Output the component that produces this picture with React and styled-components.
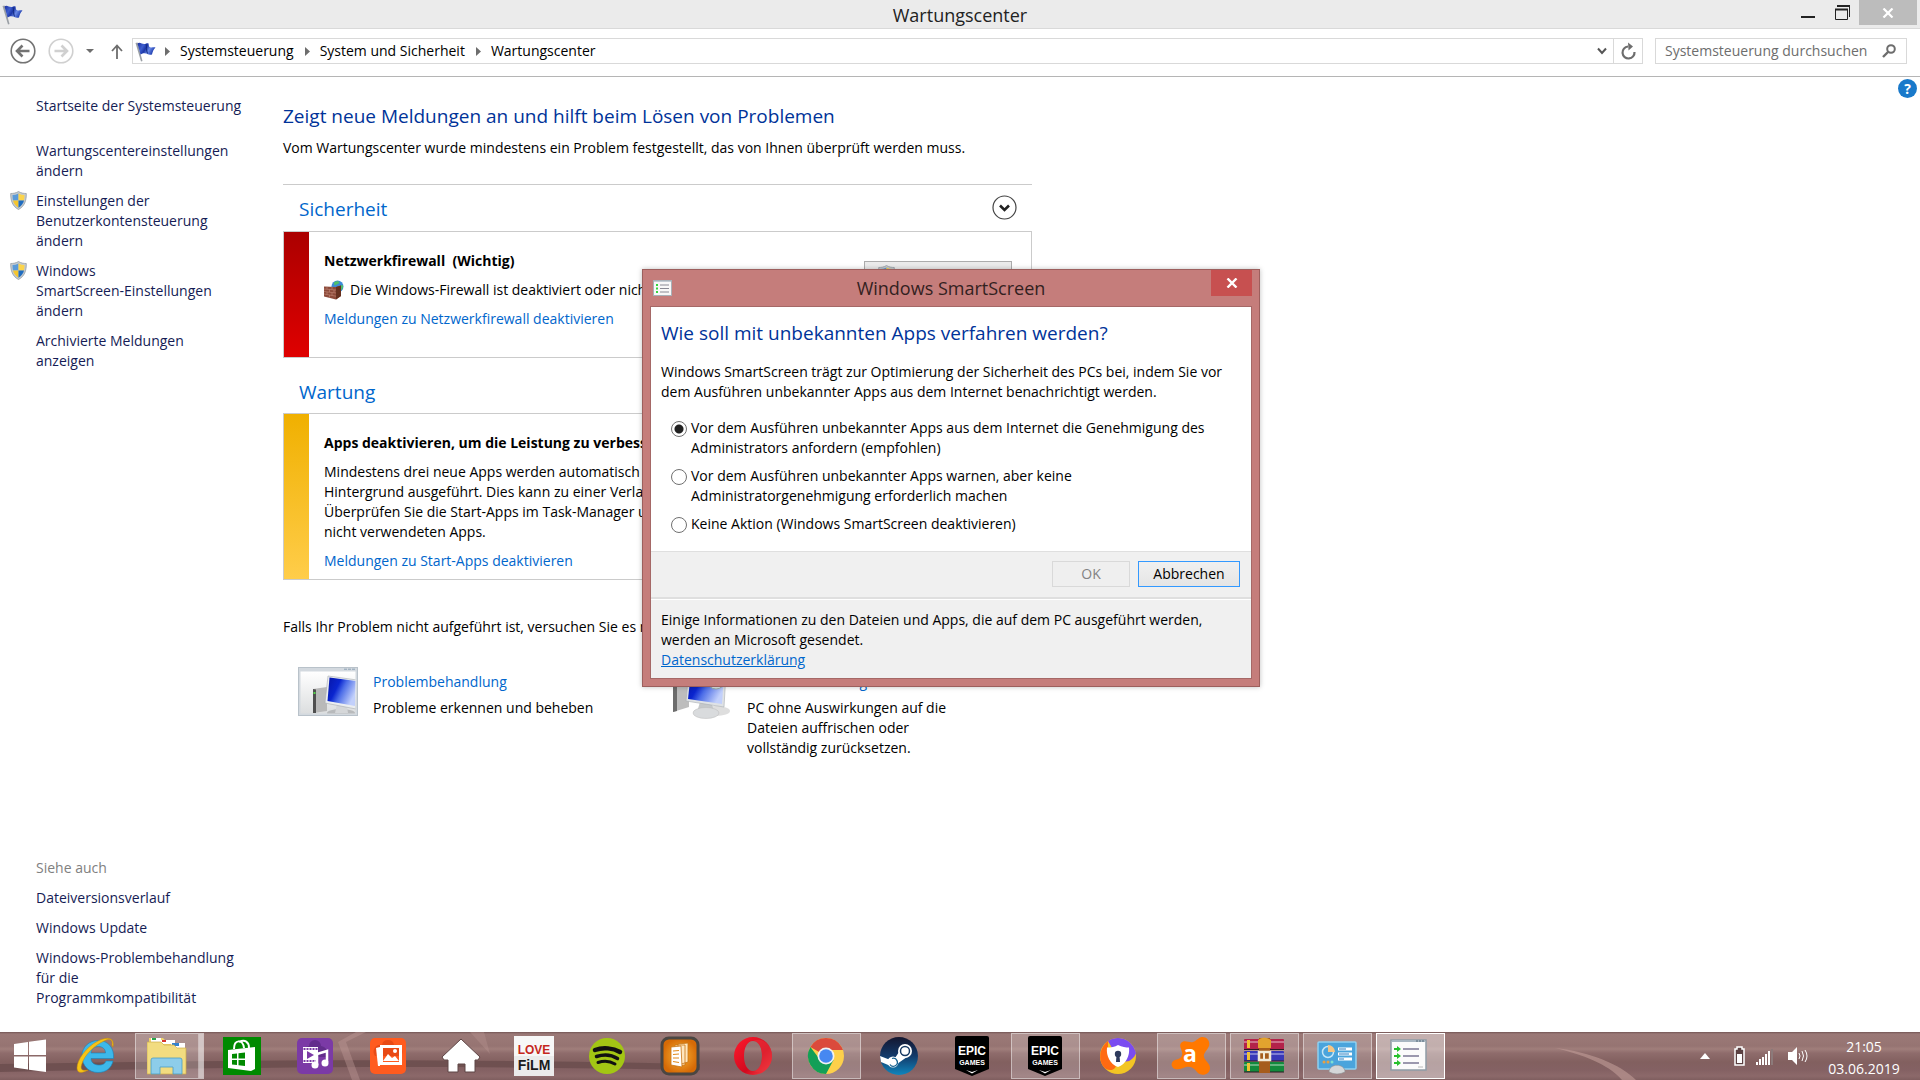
import React from 'react';
import styled, { createGlobalStyle } from 'styled-components';

const GlobalStyle = createGlobalStyle`
    *, *::before, *::after{
        box-sizing: border-box;
    }
    body{
        margin: 0;
        background: #fff;
        color: #000;
        font-family: 'Open Sans', 'Noto Sans', sans-serif;
        font-size: 14px;
        line-height: 20px;
    }
    h1, h2, h3, p, ul, fieldset, legend{
        margin: 0;
        padding: 0;
        border: none;
        font-weight: 400;
    }
    ul{
        list-style: none;
    }
    a{
        color: inherit;
        text-decoration: none;
    }
    button, input{
        font: inherit;
    }
    button{
        border: none;
        padding: 0;
        background: none;
    }
    svg{
        display: block;
        flex: none;
    }
`

/* ---------- icons ---------- */

const FlagIcon = () => (
    <svg width="21" height="21" viewBox="0 0 21 21">
        <defs>
            <linearGradient id="flag" x1="0" y1="0" x2="1" y2="0.4">
                <stop offset="0" stopColor="#1b2f9c" />
                <stop offset="0.35" stopColor="#3f5fd0" />
                <stop offset="0.55" stopColor="#1c36a6" />
                <stop offset="0.75" stopColor="#6a8ae6" />
                <stop offset="1" stopColor="#2443b4" />
            </linearGradient>
        </defs>
        <path d="M.5 2 L2.500 1.500 L7.500 20 L6 20.500 Z" fill="#9a9fa5" />
        <path d="M2.500 2.500 C5 0 8 4.500 11 2.500 C12 2 13 2 13.500 2.500 L14 5.500 C16 7.500 18 5.500 20.500 6.500 C18.500 8.500 17.500 11 17 13.500 C12.500 15 11 10 5.500 13.500 Z" fill="url(#flag)" />
        <path d="M11 3 C12 6 11 9 12.500 12.500" stroke="#122a82" strokeWidth="1" fill="none" />
    </svg>
)

const ShieldIcon = () => (
    <svg width="17" height="19" viewBox="0 0 17 19">
        <path d="M8.500 .5 C11 2 13.500 2.500 16.300 2.500 C16.500 9.500 14.500 15.500 8.500 18.500 C2.500 15.500 .5 9.500 .7 2.500 C3.500 2.500 6 2 8.500 .5Z" fill="#c3c9cf" stroke="#8c969e" strokeWidth=".7" />
        <path d="M8.500 2.500 C6.500 3.500 4.500 4 2.500 4 C2.500 6 2.600 7.800 3 9.500 H8.500Z" fill="#5a9ad8" />
        <path d="M8.500 2.500 C10.500 3.500 12.500 4 14.500 4 C14.500 6 14.400 7.800 14 9.500 H8.500Z" fill="#fbd44c" />
        <path d="M3 9.500 C3.800 12.500 5.500 15 8.500 16.800 V9.500Z" fill="#f5c52d" />
        <path d="M14 9.500 C13.200 12.500 11.500 15 8.500 16.800 V9.500Z" fill="#1f6cc0" />
    </svg>
)

const FirewallIcon = () => (
    <svg width="20" height="20" viewBox="0 0 20 20">
        <circle cx="13.500" cy="6.500" r="6" fill="#3b8bd8" />
        <path d="M10 2.500 C12 .5 15 1 15.500 2.500 C14 5 11 4 10.500 6Z M15 6 L19 5 C19.500 8 18 10 16 11Z" fill="#4fc06a" />
        <path d="M0 6.500 L12 7 L17 5.500 V16 L12 19.500 L0 16.500Z" fill="#8c4a3a" />
        <path d="M12 7 L17 5.500 V16 L12 19.500Z" fill="#65301f" />
        <path d="M0 9 L12 10 M0 11.500 L12 13 M0 14 L12 16.200 M3 6.800 V9.200 M8 7 V9.500 M5.500 9.500 V12 M10 10 V12.500 M3 12 V14.500 M8 12.800 V15.300 M5.500 15 V17.500" stroke="#c48a78" strokeWidth=".6" />
    </svg>
)

const MonitorArt = () => (
    <g>
        <path d="M2 14 L16 12 V36 L2 38Z" fill="#b9b9b9" />
        <path d="M2 14 L5 14.500 V38 L2 38Z" fill="#4f4f4f" />
        <path d="M2.500 17 H4.500 V19 H2.500Z" fill="#54d34a" />
        <ellipse cx="30" cy="38" rx="14" ry="4" fill="#b8babc" />
        <path d="M26 29 L36 31 L37 38 H24Z" fill="#d5d7d9" />
        <path d="M17 1 L46 5 L45 34 L14 28Z" fill="#eceef0" stroke="#a8acb0" strokeWidth=".6" />
        <path d="M18.500 2.500 L45 6 L44 31 L16.500 26Z" fill="url(#screen)" />
    </g>
)

const TroubleshootIcon = () => (
    <svg width="60" height="49" viewBox="0 0 60 49">
        <defs>
            <linearGradient id="screen" x1="0" y1="0" x2="1" y2=".5">
                <stop offset="0" stopColor="#0716a8" />
                <stop offset="0.4" stopColor="#0a25cf" />
                <stop offset="0.6" stopColor="#4d6ee8" />
                <stop offset="1" stopColor="#c2d0fb" />
            </linearGradient>
            <linearGradient id="pane" x1="0" y1="0" x2="0" y2="1">
                <stop offset="0" stopColor="#fff" />
                <stop offset="1" stopColor="#dcdedf" />
            </linearGradient>
            <clipPath id="paneClip"><path d="M2.500 4.500 H57.500 V46.500 H2.500Z" /></clipPath>
        </defs>
        <rect x=".5" y=".5" width="59" height="48" fill="#d3d9df" stroke="#b9c2ca" />
        <rect x="2.500" y="4.500" width="55" height="42" fill="url(#pane)" />
        <path d="M46 2.200 H58" stroke="#8fa3b5" strokeDasharray="3 1" />
        <g clipPath="url(#paneClip)"><g transform="translate(13 8)"><MonitorArt /></g></g>
    </svg>
)

const RecoveryIcon = () => (
    <svg width="60" height="52" viewBox="0 0 60 52">
        <g transform="translate(0 3)">
            <path d="M1 10 L17 7 V37 L1 42Z" fill="#bdbdbd" />
            <path d="M1 10 L5 10.500 V41 L1 42Z" fill="#6c6c6c" />
            <ellipse cx="44" cy="41" rx="14" ry="5" fill="#dedede" />
            <path d="M28 32 L40 34 L42 42 H25Z" fill="#c5c8ca" />
            <ellipse cx="34" cy="43" rx="13" ry="5.500" fill="#d9dbdd" stroke="#bbb" strokeWidth=".5" />
            <path d="M17 0 L54 3 L52 37 L14 31Z" fill="#dfe2e5" stroke="#a8acb0" strokeWidth=".6" />
            <path d="M19 2 L52 5 L50 34 L16 29Z" fill="url(#screen)" />
            <circle cx="44" cy="10" r="9" fill="#dfe8e8" stroke="#98b0a8" />
        </g>
    </svg>
)

const ListIcon = () => (
    <svg width="19" height="16" viewBox="0 0 19 16">
        <rect x=".5" y=".5" width="18" height="15" fill="#f8f8f8" stroke="#a9b1b8" />
        <path d="M1 1.500 H18" stroke="#c3ccd4" />
        <path d="M3 5 H5 M3 8.500 H5 M3 12 H5" stroke="#35d53c" strokeWidth="2" />
        <path d="M7 5 H16 M7 8.500 H16 M7 12 H16" stroke="#8a8a94" />
    </svg>
)

const BackIcon = ({ color }) => (
    <svg width="26" height="26" viewBox="0 0 26 26" fill="none" stroke={color}>
        <circle cx="13" cy="13" r="11.800" strokeWidth="1.600" />
        <path d="M19.500 13 H8 M12.500 7.500 L7 13 L12.500 18.500" strokeWidth="2.600" />
    </svg>
)

const ForwardIcon = ({ color }) => (
    <svg width="26" height="26" viewBox="0 0 26 26" fill="none" stroke={color}>
        <circle cx="13" cy="13" r="11.800" strokeWidth="1.600" />
        <path d="M6.500 13 H18 M13.500 7.500 L19 13 L13.500 18.500" strokeWidth="2.600" />
    </svg>
)

const CrumbArrow = () => (
    <svg width="5" height="9" viewBox="0 0 5 9"><path d="M0 0 L5 4.500 L0 9Z" fill="#6d6d6d" /></svg>
)

/* ---------- window chrome ---------- */

const Screen = styled.div`
    display: flex;
    flex-direction: column;
    min-height: 100vh;
    position: relative;
`

const TitleBar = styled.header`
    display: grid;
    grid-template-columns: 1fr auto 1fr;
    height: 29px;
    background: #ebebeb;
    border-bottom: 1px solid #d9d9d9;
    .icon{
        padding: 4px 2px;
    }
    h1{
        font-size: 18px;
        line-height: 30px;
        color: #222;
    }
`

const WindowButtons = styled.div`
    display: flex;
    justify-content: flex-end;
    align-items: flex-start;
    padding-right: 3px;
`

const WindowButton = styled.button`
    display: flex;
    justify-content: center;
    align-items: center;
    width: ${(props) => (props.$close ? '58px' : '34px')};
    height: 25px;
    background: ${(props) => (props.$close ? '#bcbcbc' : 'transparent')};
`

const NavBar = styled.nav`
    display: flex;
    align-items: center;
    height: 48px;
    padding: 0 13px 3px 10px;
    border-bottom: 1px solid #b5b5b5;
`

const NavButton = styled.button`
    display: flex;
    justify-content: center;
    align-items: center;
    width: ${(props) => props.$width};
    height: 26px;
    padding-left: ${(props) => (props.$up ? '8px' : '0')};
`

const AddressBar = styled.div`
    display: flex;
    align-items: center;
    flex: 1;
    height: 26px;
    padding-left: 2px;
    border: 1px solid #d9d9d9;
    ul{
        display: flex;
        flex: 1;
        margin-left: 9px;
    }
    li{
        display: flex;
        align-items: center;
        gap: 10px;
        margin-right: 11px;
    }
    .refresh{
        border-left: 1px solid #d9d9d9;
    }
`

const SearchBox = styled.label`
    display: flex;
    align-items: center;
    width: 252px;
    height: 26px;
    margin-left: 12px;
    padding: 0 10px 0 9px;
    border: 1px solid #d9d9d9;
    input{
        flex: 1;
        min-width: 0;
        padding: 0;
        border: none;
        outline: none;
        background: none;
        color: #6d6d6d;
        &::placeholder{
            color: #6d6d6d;
            opacity: 1;
        }
    }
`

/* ---------- page ---------- */

const Content = styled.div`
    display: flex;
    flex: 1;
`

const Sidebar = styled.aside`
    display: flex;
    flex-direction: column;
    justify-content: space-between;
    width: 283px;
    padding: 19px 20px 24px 10px;
    color: #151c55;
`

const SideList = styled.ul`
    display: flex;
    flex-direction: column;
    gap: 10px;
`

const SideItem = styled.li`
    display: flex;
    margin-bottom: ${(props) => (props.$home ? '15px' : '0')};
    color: ${(props) => (props.$muted ? '#808080' : 'inherit')};
    white-space: pre-line;
    .shield{
        width: 26px;
        flex: none;
    }
`

const Main = styled.main`
    flex: 1;
    max-width: 749px;
    padding-top: 24px;
    > h1{
        font-size: 19px;
        line-height: 30px;
        color: #003399;
    }
    > p{
        margin-top: 7px;
    }
    > .hint{
        margin-top: 37px;
    }
`

const Section = styled.section`
    h2{
        display: flex;
        justify-content: space-between;
        align-items: center;
        height: 46px;
        padding: 4px 15px 0 16px;
        font-size: 19px;
        color: #0066cc;
        button{
            margin-bottom: 4px;
        }
    }
    &:first-of-type{
        margin-top: 26px;
        border-top: 1px solid #cbcbcb;
        h2{
            padding-top: 2px;
        }
    }
    &:last-of-type{
        margin-top: 9px;
    }
`

const Card = styled.div`
    display: flex;
    height: ${(props) => props.$height};
    border: 1px solid #cbcbcb;
    .bar{
        width: 25px;
        background: linear-gradient(${(props) => props.$colors});
    }
    .body{
        display: flex;
        flex-direction: column;
        gap: 9px;
        flex: 1;
        padding: 19px 0 0 15px;
    }
    h3{
        font-weight: 700;
        white-space: pre;
        font-size: 14px;
    }
    .line{
        display: flex;
        gap: 6px;
    }
    .action{
        display: flex;
        justify-content: center;
        gap: 6px;
        width: 148px;
        height: 28px;
        margin: 29px 19px 0 0;
        padding-top: 3px;
        background: #ebebeb;
        border: 1px solid #acacac;
    }
`

const Link = styled.a`
    color: #0066cc;
    text-decoration: ${(props) => (props.$underline ? 'underline' : 'none')};
`

const Options = styled.div`
    display: grid;
    grid-template-columns: 374px 1fr;
    padding: 30px 0 0 15px;
`

const Option = styled.div`
    display: flex;
    gap: 15px;
    div{
        display: flex;
        flex-direction: column;
        gap: 6px;
        width: 230px;
        padding-top: 5px;
    }
`

const HelpButton = styled.button`
    width: 19px;
    height: 19px;
    margin: 2px 3px 0 auto;
    border-radius: 50%;
    background: #1979ca;
    color: #fff;
    font-weight: 700;
    font-size: 14px;
    line-height: 19px;
`

/* ---------- dialog ---------- */

const Dialog = styled.section`
    position: absolute;
    left: 642px;
    top: 269px;
    width: 618px;
    padding: 0 7px 7px;
    background: #c57d7b;
    border: 1px solid #9c5f5d;
    box-shadow: 0 0 5px rgba(0, 0, 0, 0.25);
    header{
        display: grid;
        grid-template-columns: 1fr auto 1fr;
        height: 36px;
        h2{
            font-size: 18px;
            line-height: 37px;
            color: #33211f;
        }
        .icon{
            padding: 10px 3px;
        }
        .close{
            display: flex;
            justify-content: center;
            align-items: center;
            justify-self: end;
            width: 41px;
            height: 26px;
            background: #c75050;
        }
    }
`

const DialogBody = styled.div`
    background: #f0f0f0;
    border: 1px solid #a56866;
    .question{
        padding: 11px 10px 9px;
        background: #fff;
        h3{
            font-size: 19px;
            line-height: 30px;
            color: #003399;
        }
        p{
            margin: 14px 0 16px;
        }
    }
    .buttons{
        display: flex;
        justify-content: flex-end;
        gap: 8px;
        padding: 9px 11px 10px;
        border-top: 1px solid #dfdfdf;
        border-bottom: 2px solid #dfdfdf;
    }
    .privacy{
        padding: 10px 10px 8px;
        border-top: 1px solid #fff;
    }
`

const RadioRow = styled.label`
    display: flex;
    gap: 4px;
    margin-bottom: 8px;
    padding-left: 10px;
    input{
        appearance: none;
        flex: none;
        width: 16px;
        height: 16px;
        margin: 3px 0 0;
        border: 1px solid #707070;
        border-radius: 50%;
        background: #fff;
        &:checked{
            background: radial-gradient(circle, #212121 4px, #fff 5px);
        }
    }
`

const DialogButton = styled.button`
    width: ${(props) => props.$width};
    height: 26px;
    border: 1px solid ${(props) => (props.disabled ? '#d9d9d9' : '#3399ff')};
    background: ${(props) => (props.disabled ? '#efefef' : 'linear-gradient(#f0f0f0, #e5e5e5)')};
    color: ${(props) => (props.disabled ? '#838383' : '#000')};
`

/* ---------- taskbar ---------- */

const Taskbar = styled.footer`
    display: flex;
    position: relative;
    height: 48px;
    background: linear-gradient(#745655 0, #9b7977 2px, #967472 14px, #a07e7b 17px, #8f6c6c 21px, #82605f 30px, #846163 38px, #8c696a 44px, #7f5e5f 48px);
    .tray{
        display: flex;
        align-items: center;
        position: relative;
        margin-left: auto;
    }
    .clock{
        width: 112px;
        padding-top: 4px;
        text-align: center;
        line-height: 22px;
        color: #fff;
    }
`

const Wallpaper = styled.svg`
    position: absolute;
    left: 0;
    top: 0;
`

const StartButton = styled.button`
    display: flex;
    justify-content: center;
    align-items: center;
    position: relative;
    width: 62px;
    padding-right: 2px;
`

const TaskButton = styled.button`
    display: flex;
    justify-content: center;
    align-items: center;
    position: relative;
    width: 69px;
    margin: 1px 4px 1px 0;
    padding-right: ${(props) => (props.$stacked ? '5px' : '2px')};
    border: 1px solid ${(props) => (props.$active ? '#fff' : props.$open ? 'rgba(255,255,255,.45)' : 'transparent')};
    background: ${(props) => (props.$active ? 'rgba(255,255,255,.42)' : props.$open ? 'rgba(255,255,255,.2)' : 'transparent')};
    box-shadow: ${(props) => (props.$stacked ? 'inset -4px 0 0 rgba(255,255,255,.15), inset -5px 0 0 rgba(255,255,255,.4)' : 'none')};
`

const Icon = ({ children }) => (
    <svg width="40" height="40" viewBox="0 0 40 40">{children}</svg>
)

const EpicArt = () => (
    <Icon>
        <path d="M3 2 Q3 0 5 0 H35 Q37 0 37 2 V33 L20 40 L3 33Z" fill="#000" />
        <text x="20" y="19" textAnchor="middle" fill="#fff" fontFamily="'Liberation Sans Narrow', 'Liberation Sans'" fontWeight="700" fontSize="12">EPIC</text>
        <text x="20" y="29" textAnchor="middle" fill="#fff" fontFamily="'Liberation Sans'" fontWeight="700" fontSize="7">GAMES</text>
        <path d="M14 34 L20 36 L26 34 L20 37.500Z" fill="#fff" />
    </Icon>
)

const apps = [
    {
        name: 'Internet Explorer',
        art: (
            <Icon>
                <path d="M37 25 H30 C29 28 26 29.500 22 29 C17.500 28.500 15 26 15 22.500 H37.500 C38.500 12 32 4.500 22.500 4.500 C13 4.500 6 11 6 20 C6 30 13 36.500 22 36.500 C30 36.500 35.500 32 37 25Z M15 17 C15.500 12.500 18.500 10.500 22.500 10.500 C26.500 10.500 29.500 13 29.500 17Z" fill="#3db8ea" stroke="#1585bd" strokeWidth=".6" />
                <path d="M37 11 C39 2 32 0 22 5 C10 11 1 24 1 32 C1 38 7 37 12 34 C7 35 4 34 5.500 29 C8 19 19 9 28 5 C34 2 37 4 36 9Z" fill="#f8c416" stroke="#c98c08" strokeWidth=".5" />
            </Icon>
        ),
    },
    {
        name: 'Explorer', open: true, stacked: true,
        art: (
            <Icon>
                <path d="M2 2 H16 L19 5 H28 V14 H2Z" fill="#efd36c" />
                <path d="M4 2 H14 V6 H4Z M14 4 H28 V8 H14Z M24 7 H38 V12 H24Z" fill="#fff" />
                <path d="M5 2 H9 V4 H5Z" fill="#26a34a" /><path d="M15 4 H19 V6 H15Z" fill="#d8382e" /><path d="M25 7 H32 V10 H25Z" fill="#3282cf" />
                <path d="M0 6 H14 L17 9 H27 L30 12 H39 V38 H0Z" fill="#f2dc80" stroke="#cfae47" strokeWidth=".7" />
                <path d="M4 24 Q4 22 6 22 H33 Q35 22 35 24 V38 H26 V31 H13 V38 H4Z" fill="#8dcdea" stroke="#4a9cc4" strokeWidth=".8" />
            </Icon>
        ),
    },
    {
        name: 'Store',
        art: (
            <Icon>
                <rect x="1" y="1" width="38" height="38" fill="#008a00" />
                <path d="M12 13 C12 3 21 3 22 12 M17 6 C23 3 27 6 27 12" stroke="#fff" strokeWidth="2" fill="none" />
                <path d="M6 14 L33 11 V33 L29 35 L6 32Z" fill="#fff" />
                <path d="M10 18 L15 17.500 V22.500 H10Z M16.500 17.300 L23 16.500 V22.500 H16.500Z M10 24 H15 V29 L10 28.500Z M16.500 24 H23 V30 L16.500 29.200Z" fill="#008a00" />
            </Icon>
        ),
    },
    {
        name: 'Medien',
        art: (
            <Icon>
                <rect x="2" y="2" width="36" height="36" rx="5" fill="#7b3aa6" />
                <path d="M20 4 A6 6 0 0 1 26 10 A7 7 0 0 1 31 21 H9 A7 7 0 0 1 14 10 A6 6 0 0 1 20 4Z" fill="#54257b" opacity=".6" />
                <path d="M8 11 H23 V27 H8Z" fill="#fff" />
                <path d="M8.500 13 H23 M8.500 25 H23" stroke="#7b3aa6" strokeWidth="2" strokeDasharray="2 1" />
                <path d="M12 15 L19 19 L12 23Z" fill="#7b3aa6" />
                <path d="M22 29 V18 L32 15 V26" fill="none" stroke="#fff" strokeWidth="2.500" />
                <circle cx="20" cy="29" r="3.500" fill="#fff" /><circle cx="30" cy="27" r="3.500" fill="#fff" />
            </Icon>
        ),
    },
    {
        name: 'Fotos',
        art: (
            <Icon>
                <rect x="2" y="2" width="36" height="36" rx="5" fill="#ff5b1f" />
                <path d="M20 4 A6 6 0 0 1 26 9 A7 7 0 0 1 33 20 H7 A7 7 0 0 1 14 9 A6 6 0 0 1 20 4Z" fill="#d83f0f" opacity=".6" />
                <path d="M8 12 L12 11 V30 L10 30Z" fill="#fff" />
                <rect x="13.500" y="10.500" width="19" height="17" fill="none" stroke="#fff" strokeWidth="3" />
                <path d="M15 25 L20 18 L24 22 L27 20 L31 25Z" fill="#fff" /><circle cx="27" cy="15" r="2" fill="#fff" />
            </Icon>
        ),
    },
    {
        name: 'Startseite',
        art: (
            <Icon>
                <path d="M20 3 L39 21 L37 24 H34 V36 H24 V28 H17 V36 H7 V24 H3 L1 21Z" fill="#fff" stroke="#5f4646" strokeWidth="1" />
            </Icon>
        ),
    },
    {
        name: 'Lovefilm',
        art: (
            <Icon>
                <rect width="40" height="40" fill="#f7f7f7" />
                <rect y="20" width="40" height="20" fill="#ebebeb" />
                <text x="20" y="18" textAnchor="middle" fill="#c5271d" fontFamily="'Liberation Sans Narrow', 'Liberation Sans'" fontWeight="700" fontSize="12">LOVE</text>
                <text x="20" y="34" textAnchor="middle" fill="#1b1b1b" fontFamily="'Liberation Sans Narrow', 'Liberation Sans'" fontWeight="700" fontSize="14">FiLM</text>
            </Icon>
        ),
    },
    {
        name: 'Spotify',
        art: (
            <Icon>
                <circle cx="20" cy="20" r="18" fill="#a3c614" />
                <path d="M8 14 C16 11 26 12 33 16" stroke="#111" strokeWidth="4.500" strokeLinecap="round" fill="none" />
                <path d="M9.500 20.500 C17 18 25 19 30.500 22.500" stroke="#111" strokeWidth="3.500" strokeLinecap="round" fill="none" />
                <path d="M11 26.500 C17 24.500 23 25 28 28" stroke="#111" strokeWidth="3" strokeLinecap="round" fill="none" />
            </Icon>
        ),
    },
    {
        name: 'Dokumente',
        art: (
            <Icon>
                <defs><radialGradient id="doc"><stop offset="0" stopColor="#f9b233" /><stop offset="1" stopColor="#d56a06" /></radialGradient></defs>
                <rect x="2" y="2" width="36" height="36" rx="7" fill="url(#doc)" stroke="#4a4642" strokeWidth="3" />
                <path d="M18 8 L28 7 V26 L18 29Z M15 9 L25 9 V29 L15 30Z" fill="#ffe6bf" stroke="#c87412" strokeWidth=".8" />
                <path d="M11 11 L21 10 L22 31 L11 29Z" fill="#fff" stroke="#c87412" strokeWidth=".8" />
                <path d="M13 15 L19 14.500 M13 18.500 L19 18 M13 22 L19 22 M13 25.500 L19 26.500" stroke="#e08a1c" strokeWidth="1.200" />
            </Icon>
        ),
    },
    {
        name: 'Opera',
        art: (
            <Icon>
                <defs><linearGradient id="opera" x1="0" y1="0" x2="1" y2="1"><stop offset="0" stopColor="#ff1b2d" /><stop offset=".6" stopColor="#d30a1f" /><stop offset="1" stopColor="#ff4b4b" /></linearGradient></defs>
                <path fillRule="evenodd" d="M20 1 A19 19 0 1 0 20 39 A19 19 0 1 0 20 1Z M20 5 C26 5 29 12 29 20 C29 28 26 35 20 35 C14 35 11 28 11 20 C11 12 14 5 20 5Z" fill="url(#opera)" />
                <path d="M20 5 C29 1 39 8 39 20 C39 32 29 39 20 35 C26 35 29 28 29 20 C29 12 26 5 20 5Z" fill="#e8303a" opacity=".6" />
            </Icon>
        ),
    },
    {
        name: 'Chrome', open: true,
        art: (
            <Icon>
                <circle cx="20" cy="20" r="18" fill="#fdd04b" />
                <path d="M20 20 L4.400 11 A18 18 0 0 1 35.600 11 L37 14 H20Z" fill="#db4a3c" />
                <path d="M4.400 11 A18 18 0 0 0 20 38 L27.500 24 L20 20 L13.500 23Z" fill="#139f57" />
                <circle cx="20" cy="20" r="8.500" fill="#f2f2f2" /><circle cx="20" cy="20" r="6.800" fill="#4688f1" />
            </Icon>
        ),
    },
    {
        name: 'Steam',
        art: (
            <Icon>
                <defs><linearGradient id="steam" x1="0" y1="0" x2="0" y2="1"><stop offset="0" stopColor="#14162f" /><stop offset=".5" stopColor="#133a6a" /><stop offset="1" stopColor="#0f86bd" /></linearGradient></defs>
                <circle cx="20" cy="20" r="19" fill="url(#steam)" />
                <path d="M1 20 L14 25 L20 16 L28 21 L18 28 L14 31 L2 26Z" fill="#fff" />
                <circle cx="26" cy="15" r="7" fill="#fff" /><circle cx="26" cy="15" r="4.500" fill="none" stroke="#173963" strokeWidth="1.500" />
                <circle cx="14" cy="26" r="5.500" fill="#fff" /><path d="M11 28.500 A4 4 0 1 0 13 22.500" fill="none" stroke="#14608f" strokeWidth="1.300" />
            </Icon>
        ),
    },
    { name: 'Epic Games', art: <EpicArt /> },
    { name: 'Epic Games Launcher', open: true, art: <EpicArt /> },
    {
        name: 'Secure Browser',
        art: (
            <Icon>
                <circle cx="20" cy="20" r="18" fill="#f2c524" />
                <path d="M10 5 C18 -1 34 1 38 17 C36 23 30 27 26 25 L14 12Z" fill="#7a4cf0" />
                <path d="M10 5 C0 13 0 27 8 33 C14 36 20 32 17 27 L10 16Z" fill="#ff6a12" />
                <path d="M20 9 C24 11 28 11.500 31 11.500 C32 20 28 28 20 31 C12 28 8 20 9 11.500 C13 11.500 17 11 20 9Z" fill="#fff" />
                <circle cx="20" cy="18" r="3.200" fill="#2e3a5c" /><path d="M18.500 19 H21.500 L22 26 H18Z" fill="#2e3a5c" />
            </Icon>
        ),
    },
    {
        name: 'Avast', open: true,
        art: (
            <Icon>
                <path d="M27 3 C32 -2 40 3 38 10 C36 15 32 17 33 21 C34 25 39 27 39 32 C39 39 30 41 26 36 C23 32 20 30 15 31 C11 32 9 34 4 33 C-1 31 0 25 4 24 C9 23 12 21 11 16 C10 12 8 10 10 7 C13 3 18 7 22 6 C24 5.500 25 4 27 3Z" fill="#ff7800" />
                <text x="19" y="26" textAnchor="middle" fill="#fff" fontFamily="'Open Sans'" fontWeight="700" fontSize="23">a</text>
            </Icon>
        ),
    },
    {
        name: 'WinRAR', open: true,
        art: (
            <Icon>
                <rect x="0" y="3" width="40" height="11" rx="1" fill="#b3224a" /><rect x="0" y="15" width="40" height="10" rx="1" fill="#3838b8" /><rect x="0" y="26" width="40" height="10" rx="1" fill="#138a3c" />
                <path d="M0 6 H40 M0 18 H40 M0 29 H40" stroke="#fff" strokeOpacity=".35" strokeWidth="2" />
                <path d="M0 13.500 H40 M0 25 H40 M0 36 H40" stroke="#2a1a20" strokeWidth="1" />
                <path d="M3 4 H6 V12 H3Z M3 16 H6 V24 H3Z M3 27 H6 V35 H3Z" fill="#f1c232" />
                <rect x="15" y="2" width="11" height="35" fill="#a65c1c" /><path d="M14 4 Q20 -1 27 4 V12 H14Z" fill="#e2a32e" />
                <rect x="15" y="16" width="11" height="8" fill="none" stroke="#f2ead8" strokeWidth="2.500" /><path d="M20 15 V23" stroke="#f2ead8" strokeWidth="2" />
            </Icon>
        ),
    },
    {
        name: 'Systemsteuerung', open: true,
        art: (
            <Icon>
                <rect x="1" y="6" width="38" height="27" rx="1" fill="#4aa4dc" stroke="#8fd0f0" strokeWidth="1.500" />
                <circle cx="11" cy="16" r="5.500" fill="none" stroke="#c5e6f7" strokeWidth="1.500" /><path d="M11 16 V9 A7 7 0 0 1 18 16Z" fill="#f6c583" />
                <path d="M21 13 H35 M21 18 H35 M21 23 H35" stroke="#fff" strokeWidth="3" /><path d="M22 13 H29 M22 18 H32 M22 23 H27" stroke="#2f7fc0" strokeWidth="1" />
                <circle cx="7" cy="26" r="1.500" fill="#e8a040" /><circle cx="11" cy="26" r="1.500" fill="#e8a040" /><circle cx="15" cy="26" r="1.500" fill="#7ee0d0" />
                <path d="M12 36 C12 27 28 27 28 36 Q20 40 12 36Z" fill="#d4d6d8" stroke="#8c8e90" strokeWidth=".6" />
            </Icon>
        ),
    },
    {
        name: 'Windows SmartScreen', open: true, active: true,
        art: (
            <Icon>
                <rect x="1" y="4" width="35" height="30" fill="#fbfbfb" stroke="#8f9ca6" strokeWidth="1.500" />
                <path d="M2 5 H35" stroke="#a8b6c1" strokeWidth="2" /><path d="M26 5 H34" stroke="#536878" strokeDasharray="2 1" />
                <path d="M4 13 H8 M4 20 H8 M4 27 H8" stroke="#25c12d" strokeWidth="2" />
                <path d="M7 10 L11 13 L7 16Z M7 17 L11 20 L7 23Z M7 24 L11 27 L7 30Z" fill="#25c12d" />
                <path d="M13 13 H29 M13 20 H29 M13 27 H29" stroke="#7c7895" strokeWidth="1.500" /><path d="M28 31 H33" stroke="#bbb" />
            </Icon>
        ),
    },
]

const sideLinks = [
    { text: 'Startseite der Systemsteuerung', home: true },
    { text: 'Wartungscentereinstellungen\nändern' },
    { text: 'Einstellungen der\nBenutzerkontensteuerung\nändern', shield: true },
    { text: 'Windows\nSmartScreen-Einstellungen\nändern', shield: true },
    { text: 'Archivierte Meldungen\nanzeigen' },
]

const seeAlso = ['Dateiversionsverlauf', 'Windows Update', 'Windows-Problembehandlung\nfür die\nProgrammkompatibilität']

const SmartScreenDialog = () => (
    <Dialog role="dialog" aria-labelledby="dialog-title">
        <header>
            <div className="icon"><ListIcon /></div>
            <h2 id="dialog-title">Windows SmartScreen</h2>
            <button className="close" aria-label="Schließen">
                <svg width="12" height="10" viewBox="0 0 12 10"><path d="M1.500 .5 L10.500 9.500 M10.500 .5 L1.500 9.500" stroke="#fff" strokeWidth="2.400" /></svg>
            </button>
        </header>
        <DialogBody>
            <fieldset className="question">
                <h3>Wie soll mit unbekannten Apps verfahren werden?</h3>
                <p>
                    Windows SmartScreen trägt zur Optimierung der Sicherheit des PCs bei, indem Sie vor<br />
                    dem Ausführen unbekannter Apps aus dem Internet benachrichtigt werden.
                </p>
                <RadioRow>
                    <input type="radio" name="mode" defaultChecked />
                    <span>Vor dem Ausführen unbekannter Apps aus dem Internet die Genehmigung des<br />Administrators anfordern (empfohlen)</span>
                </RadioRow>
                <RadioRow>
                    <input type="radio" name="mode" />
                    <span>Vor dem Ausführen unbekannter Apps warnen, aber keine<br />Administratorgenehmigung erforderlich machen</span>
                </RadioRow>
                <RadioRow>
                    <input type="radio" name="mode" />
                    <span>Keine Aktion (Windows SmartScreen deaktivieren)</span>
                </RadioRow>
            </fieldset>
            <div className="buttons">
                <DialogButton $width="78px" disabled>OK</DialogButton>
                <DialogButton $width="102px">Abbrechen</DialogButton>
            </div>
            <div className="privacy">
                <p>Einige Informationen zu den Dateien und Apps, die auf dem PC ausgeführt werden,<br />werden an Microsoft gesendet.</p>
                <Link href="#" $underline>Datenschutzerklärung</Link>
            </div>
        </DialogBody>
    </Dialog>
)

const App = () => {
    return (
        <Screen>
            <GlobalStyle />
            <TitleBar>
                <div className="icon"><FlagIcon /></div>
                <h1>Wartungscenter</h1>
                <WindowButtons>
                    <WindowButton aria-label="Minimieren">
                        <svg width="14" height="16" viewBox="0 0 14 16"><path d="M0 12 H14" stroke="#222" strokeWidth="2" /></svg>
                    </WindowButton>
                    <WindowButton aria-label="Verkleinern">
                        <svg width="15" height="16" viewBox="0 0 15 16"><path d="M2 1.500 H14.500 V12 M.5 4 V14.500 H12.500 V4" fill="none" stroke="#222" /><path d="M0 4.500 H13 M2 1 H15" stroke="#222" strokeWidth="2" /></svg>
                    </WindowButton>
                    <WindowButton $close aria-label="Schließen">
                        <svg width="12" height="10" viewBox="0 0 12 10"><path d="M1.500 .5 L10.500 9.500 M10.500 .5 L1.500 9.500" stroke="#fff" strokeWidth="2.200" /></svg>
                    </WindowButton>
                </WindowButtons>
            </TitleBar>
            <NavBar>
                <NavButton $width="26px" aria-label="Zurück"><BackIcon color="#737373" /></NavButton>
                <NavButton $width="50px" aria-label="Vorwärts"><ForwardIcon color="#d0d0d0" /></NavButton>
                <NavButton $width="8px" aria-label="Verlauf">
                    <svg width="8" height="4" viewBox="0 0 8 4"><path d="M0 0 H8 L4 4Z" fill="#6d6d6d" /></svg>
                </NavButton>
                <NavButton $width="38px" $up aria-label="Nach oben">
                    <svg width="12" height="15" viewBox="0 0 12 15"><path d="M6 15 V2 M1 7 L6 1.500 L11 7" stroke="#6d6d6d" strokeWidth="1.800" fill="none" /></svg>
                </NavButton>
                <AddressBar>
                    <FlagIcon />
                    <ul>
                        <li><CrumbArrow /><a href="#">Systemsteuerung</a></li>
                        <li><CrumbArrow /><a href="#">System und Sicherheit</a></li>
                        <li><CrumbArrow /><a href="#">Wartungscenter</a></li>
                    </ul>
                    <NavButton $width="22px" aria-label="Vorherige Orte">
                        <svg width="10" height="8" viewBox="0 0 10 8"><path d="M1 1.500 L5 6 L9 1.500" stroke="#555" strokeWidth="2" fill="none" /></svg>
                    </NavButton>
                    <NavButton $width="29px" className="refresh" aria-label="Aktualisieren">
                        <svg width="16" height="18" viewBox="0 0 16 18"><path d="M14.500 10 A6 6 0 1 1 8 4.500" stroke="#6d6d6d" strokeWidth="2.200" fill="none" /><path d="M8 .5 L13 4.500 L8.500 8.500Z" fill="#6d6d6d" /></svg>
                    </NavButton>
                </AddressBar>
                <SearchBox>
                    <input type="text" placeholder="Systemsteuerung durchsuchen" aria-label="Systemsteuerung durchsuchen" />
                    <svg width="14" height="14" viewBox="0 0 14 14"><circle cx="9" cy="5" r="3.800" fill="none" stroke="#6d6d6d" strokeWidth="2" /><path d="M6.500 7.500 L1 13" stroke="#6d6d6d" strokeWidth="2.400" /></svg>
                </SearchBox>
            </NavBar>
            <Content>
                <Sidebar>
                    <SideList>
                        {sideLinks.map((item) => (
                            <SideItem key={item.text} $home={item.home}>
                                <span className="shield">{item.shield && <ShieldIcon />}</span>
                                <a href="#">{item.text}</a>
                            </SideItem>
                        ))}
                    </SideList>
                    <SideList>
                        <SideItem $muted><span className="shield" />Siehe auch</SideItem>
                        {seeAlso.map((text) => (
                            <SideItem key={text}><span className="shield" /><a href="#">{text}</a></SideItem>
                        ))}
                    </SideList>
                </Sidebar>
                <Main>
                    <h1>Zeigt neue Meldungen an und hilft beim Lösen von Problemen</h1>
                    <p>Vom Wartungscenter wurde mindestens ein Problem festgestellt, das von Ihnen überprüft werden muss.</p>
                    <Section>
                        <h2>
                            Sicherheit
                            <button aria-label="Sicherheit erweitern">
                                <svg width="25" height="25" viewBox="0 0 25 25"><circle cx="12.500" cy="12.500" r="11.500" fill="#fff" stroke="#444" strokeWidth="1.200" /><path d="M8 10.500 L12.500 15 L17 10.500" stroke="#222" strokeWidth="2.600" fill="none" /></svg>
                            </button>
                        </h2>
                        <Card $height="127px" $colors="#ab0000, #df0000">
                            <div className="bar" />
                            <div className="body">
                                <h3>Netzwerkfirewall  (Wichtig)</h3>
                                <div className="line"><FirewallIcon />Die Windows-Firewall ist deaktiviert oder nicht richtig eingerichtet.</div>
                                <Link href="#">Meldungen zu Netzwerkfirewall deaktivieren</Link>
                            </div>
                            <button className="action"><ShieldIcon />Jetzt aktivieren</button>
                        </Card>
                    </Section>
                    <Section>
                        <h2>Wartung</h2>
                        <Card $height="167px" $colors="#f0b000, #ffcd4a">
                            <div className="bar" />
                            <div className="body">
                                <h3>Apps deaktivieren, um die Leistung zu verbessern</h3>
                                <p>
                                    Mindestens drei neue Apps werden automatisch im<br />
                                    Hintergrund ausgeführt. Dies kann zu einer Verlangsamung führen.<br />
                                    Überprüfen Sie die Start-Apps im Task-Manager und die<br />
                                    nicht verwendeten Apps.
                                </p>
                                <Link href="#">Meldungen zu Start-Apps deaktivieren</Link>
                            </div>
                        </Card>
                    </Section>
                    <p className="hint">Falls Ihr Problem nicht aufgeführt ist, versuchen Sie es mit einer dieser Optionen:</p>
                    <Options>
                        <Option>
                            <TroubleshootIcon />
                            <div>
                                <Link href="#">Problembehandlung</Link>
                                <p>Probleme erkennen und beheben</p>
                            </div>
                        </Option>
                        <Option>
                            <RecoveryIcon />
                            <div>
                                <Link href="#">Wiederherstellung</Link>
                                <p>PC ohne Auswirkungen auf die Dateien auffrischen oder vollständig zurücksetzen.</p>
                            </div>
                        </Option>
                    </Options>
                </Main>
                <HelpButton aria-label="Hilfe">?</HelpButton>
            </Content>
            <Taskbar>
                <Wallpaper width="100%" height="48">
                    <path d="M0 32 C250 28 420 26 700 32 V38 C420 33 250 35 0 40Z" fill="#5f4344" opacity=".55" />
                    <path d="M338 10 L352 48 H360 L346 10 L366 0 H356Z" fill="#c19c98" opacity=".4" />
                    <path d="M470 0 L490 22 L484 0Z" fill="#c19c98" opacity=".3" />
                    <path d="M1555 16 C1590 24 1612 36 1622 48 H1636 C1620 32 1590 20 1555 16Z" fill="#c19c98" opacity=".6" />
                </Wallpaper>
                <StartButton aria-label="Start">
                    <svg width="34" height="34" viewBox="0 0 34 34"><path d="M1 5 L15 3 V16 H1Z M16 2.800 L33 .5 V16 H16Z M1 17.500 H15 V30.500 L1 28.500Z M16 17.500 H33 V33 L16 30.700Z" fill="#fff" /></svg>
                </StartButton>
                {apps.map((app) => (
                    <TaskButton key={app.name} aria-label={app.name} $open={app.open} $active={app.active} $stacked={app.stacked}>
                        {app.art}
                    </TaskButton>
                ))}
                <div className="tray">
                    <svg width="10" height="6" viewBox="0 0 10 6"><path d="M0 6 L5 0 L10 6Z" fill="#fff" /></svg>
                    <svg width="54" height="22" viewBox="0 0 54 22">
                        <path d="M27 2 H32 V4 H34 V20 H25 V4 H27Z" fill="#5b4142" stroke="#fff" strokeWidth="1.500" /><path d="M27 9 H32 V18 H27Z" fill="#fff" />
                        <path d="M46 17 H48 V20 H46Z M49 14 H51 V20 H49Z M52 12 H54 V20 H52Z" fill="#fff" />
                    </svg>
                    <svg width="44" height="22" viewBox="0 0 44 22">
                        <path d="M1 9 H3 V20 H1Z M4 6 H6 V20 H4Z" fill="#fff" /><path d="M7 4 H9 V20 H7Z" fill="#8c7a7a" />
                        <path d="M24 7 H28 L33 2 V20 L28 15 H24Z" fill="#fff" /><path d="M35 8 Q37 11 35 14 M38 6 Q41 11 38 16 M41 5 Q45 11 41 17" stroke="#fff" fill="none" />
                    </svg>
                    <div className="clock">21:05<br />03.06.2019</div>
                </div>
            </Taskbar>
            <SmartScreenDialog />
        </Screen>
    );
}

export default App;
